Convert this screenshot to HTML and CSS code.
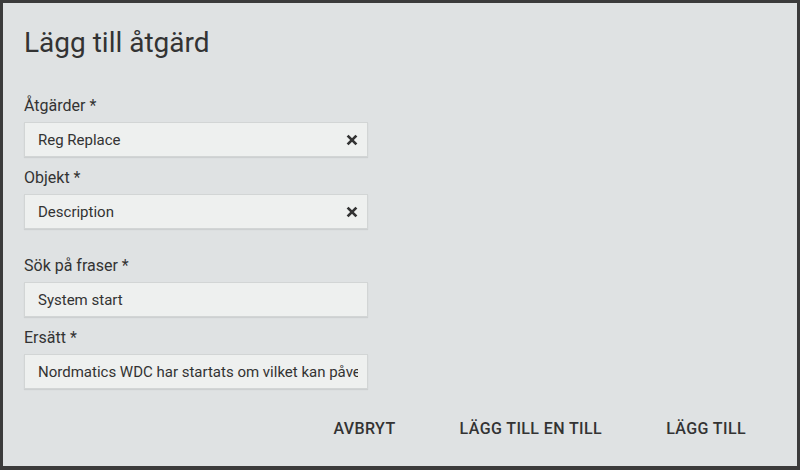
FILE: index.html
```html
<!DOCTYPE html>
<html lang="sv">
<head>
  <meta charset="UTF-8" />
  <title>Lägg till åtgärd</title>
  <link rel="stylesheet" href="styles.css">
</head>
<body>

  <div class="dialog">
    <h2 class="title">Lägg till åtgärd</h2>

    <div class="field">
      <label>Åtgärder *</label>
      <div class="box">
        <span class="value">Reg Replace</span>
        <svg class="clear" width="12" height="12" viewBox="0 0 12 12"><path d="M1.6 1.6 L10.4 10.4 M10.4 1.6 L1.6 10.4" stroke="#333" stroke-width="2.7" /></svg>
      </div>
    </div>

    <div class="field">
      <label>Objekt *</label>
      <div class="box">
        <span class="value">Description</span>
        <svg class="clear" width="12" height="12" viewBox="0 0 12 12"><path d="M1.6 1.6 L10.4 10.4 M10.4 1.6 L1.6 10.4" stroke="#333" stroke-width="2.7" /></svg>
      </div>
    </div>

    <div class="field group">
      <label>Sök på fraser *</label>
      <div class="box">
        <span class="value">System start</span>
      </div>
    </div>

    <div class="field">
      <label>Ersätt *</label>
      <div class="box">
        <span class="value">Nordmatics WDC har startats om vilket kan påverka pågående körningar</span>
      </div>
    </div>

    <div class="actions">
      <button>AVBRYT</button>
      <button>LÄGG TILL EN TILL</button>
      <button>LÄGG TILL</button>
    </div>
  </div>

</body>
</html>
```

FILE: styles.css
```css
body {
  margin: 0;
  padding: 3px;
  background-color: #3b3b3b;
  font-family: Roboto, 'Liberation Sans', sans-serif;
  color: #333;
}

.dialog {
  width: 794px;
  height: 463px;
  box-sizing: border-box;
  background-color: #dfe2e3;
  padding: 24px 21px 0 21px;
}

.title {
  margin: 0;
  font-size: 28px;
  font-weight: 400;
  line-height: 32px;
  color: #333;
}

.field {
  margin-top: 11px;
  width: 344px;
}

.field:first-of-type {
  margin-top: 37px;
}

.field.group {
  margin-top: 27px;
}

label {
  display: block;
  font-size: 16px;
  line-height: 20px;
  margin-bottom: 6px;
}

.box {
  height: 35px;
  box-sizing: border-box;
  background-color: #eef0ef;
  border: 1px solid #d2d5d5;
  box-shadow: 0 1px 1px rgba(0, 0, 0, 0.08);
  display: flex;
  align-items: center;
  padding: 0 9px 0 13px;
  gap: 10px;
}

.value {
  flex: 1;
  font-size: 15px;
  white-space: nowrap;
  overflow: hidden;
}

.clear {
  flex: none;
}

.actions {
  display: flex;
  justify-content: flex-end;
  gap: 16px;
  margin-top: 22px;
  margin-right: 6px;
}

button {
  background: none;
  border: none;
  padding: 8px 24px;
  font-family: Roboto, 'Liberation Sans', sans-serif;
  font-size: 16px;
  font-weight: 500;
  letter-spacing: 0.4px;
  color: #333;
  cursor: pointer;
}
```
